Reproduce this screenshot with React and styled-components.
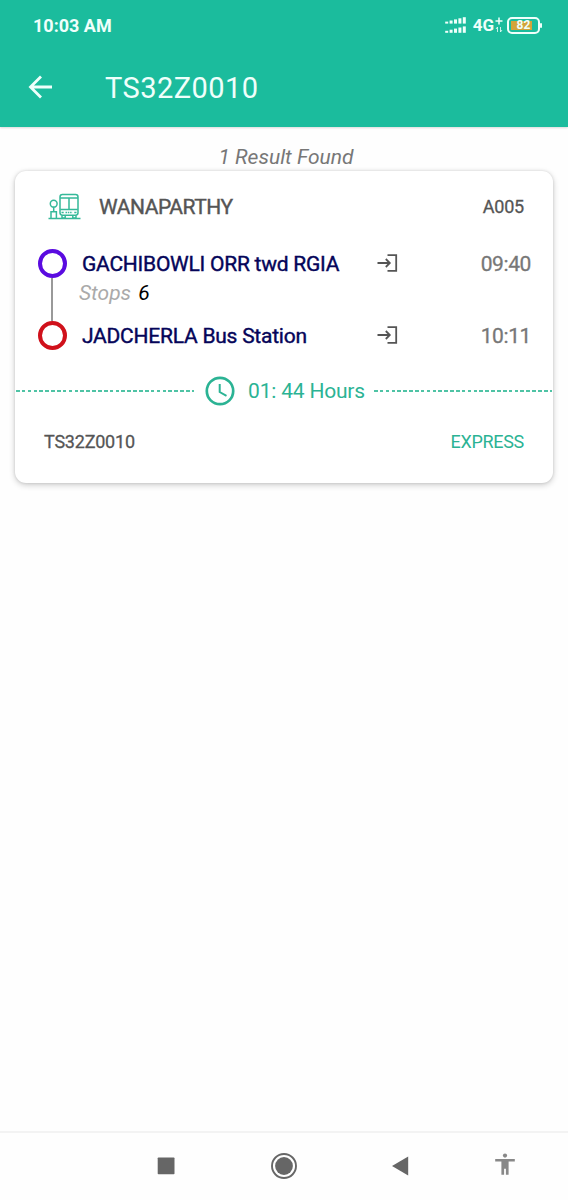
import React from 'react';
import styled, { createGlobalStyle } from 'styled-components';

const GlobalStyle = createGlobalStyle`
  * {
    box-sizing: border-box;
  }

  body {
    margin: 0;
    background: #fefefe;
    font-family: Roboto, 'Liberation Sans', sans-serif;
  }

  svg {
    display: block;
    flex-shrink: 0;
  }
`;

const Screen = styled.div`
  display: flex;
  flex-direction: column;
  width: 568px;
  height: 1200px;
  overflow: hidden;
`;

const Header = styled.header`
  height: 127px;
  background: #1bbc9d;
  color: #effffb;
  box-shadow: 0 1px 2px rgba(0, 0, 0, 0.15);
`;

const StatusBar = styled.div`
  display: flex;
  align-items: center;
  height: 50px;
  padding: 0 25px 0 33px;

  .time {
    margin-right: auto;
    font-size: 18px;
    font-weight: 700;
  }

  .network {
    margin-left: 6px;
    font-size: 17px;
    font-weight: 700;
  }
`;

const Battery = styled.div`
  position: relative;
  display: flex;
  align-items: center;
  justify-content: center;
  width: 33px;
  height: 17px;
  margin: 0 3px 0 4px;
  border: 2px solid #effffb;
  border-radius: 5px;
  background: linear-gradient(#d3a43a, #d3a43a) 2px 2px / 21px 9px no-repeat;
  font-size: 12px;
  font-weight: 700;
  line-height: 13px;

  &::after {
    content: '';
    position: absolute;
    top: 4px;
    right: -4px;
    width: 2px;
    height: 5px;
    border-radius: 1px;
    background: #effffb;
  }
`;

const Toolbar = styled.div`
  display: flex;
  align-items: center;
  height: 74px;
  padding-left: 28px;

  h1 {
    margin: 2px 0 0 52px;
    font-size: 29px;
    font-weight: 400;
    letter-spacing: 0.45px;
  }
`;

const ResultCount = styled.p`
  height: 44px;
  margin: 0;
  padding-left: 4px;
  line-height: 60px;
  text-align: center;
  font-size: 21px;
  font-style: italic;
  color: #777;
`;

const Card = styled.section`
  height: 312px;
  margin: 0 15px;
  border-radius: 11px;
  background: #fff;
  box-shadow: 0 2px 6px rgba(0, 0, 0, 0.2), 0 0 3px rgba(0, 0, 0, 0.12);
`;

const CardTitle = styled.div`
  display: flex;
  align-items: center;
  gap: 18px;
  height: 71px;
  padding: 0 29px 0 33px;
`;

const Label = styled.span`
  margin-left: ${(props) => (props.$end ? 'auto' : '0')};
  font-size: ${(props) => props.$size}px;
  letter-spacing: ${(props) => props.$spacing || 0}px;
  color: ${(props) => props.$color || '#555'};
  -webkit-text-stroke: ${(props) => props.$stroke || 0}px currentColor;
  white-space: nowrap;
`;

const Route = styled.div`
  display: grid;
  grid-template-columns: 29px 280px 1fr auto;
  grid-template-rows: 43px 29px 43px;
  column-gap: 15px;
  align-items: center;
  padding: 0 22px 0 23px;
  height: 115px;

  > svg {
    margin-bottom: 1px;
  }
`;

const Track = styled.div`
  grid-row: 1 / 4;
  display: flex;
  flex-direction: column;
  align-items: center;
`;

const Point = styled.div`
  width: 29px;
  height: 29px;
  border: 4px solid ${(props) => props.$color};
  border-radius: 50%;
`;

const Line = styled.div`
  width: 2px;
  height: 43px;
  margin-right: 1px;
  background: #999;
`;

const Stops = styled.div`
  grid-column: 2 / 5;
  align-self: start;
  margin: -6px 0 0 -3px;
  font-size: 21px;
  font-style: italic;
  line-height: 29px;
  color: #aaa;

  b {
    margin-left: 2px;
    font-weight: 400;
    color: #000;
  }
`;

const Duration = styled.div`
  display: flex;
  align-items: center;
  height: 67px;
  padding: 0 1px;
`;

const Dashes = styled.div`
  width: 178px;
  height: 2px;
  background: repeating-linear-gradient(90deg, #4fc3a5 0 3.6px, transparent 3.6px 5.86px);
`;

const DurationText = styled.div`
  display: flex;
  flex: 1;
  align-items: center;
  justify-content: center;
  gap: 13px;
  padding-left: 2px;

  span {
    padding-top: 1px;
  }
`;

const CardFooter = styled.div`
  display: flex;
  align-items: center;
  height: 35px;
  padding: 0 29px;
`;

const NavBar = styled.nav`
  display: grid;
  grid-template-columns: 118px 118px 114px 95px;
  place-items: center;
  height: 69px;
  margin-top: auto;
  padding: 0 16px 2px 107px;
  border-top: 2px solid #f3f3f3;
  background: #fefefe;
`;

const SignalIcon = () => (
  <svg width="22" height="18" viewBox="0 0 22 18" fill="#effffb">
    {[0, 1, 2, 3, 4].map((i) => (
      <g key={i}>
        <rect x={i * 4.4 + 0.2} y={5.6 - i * 1.1} width="3" height={2 + i * 1.1} />
        <rect x={i * 4.4 + 0.2} y={14.8 - i * 1.1} width="3" height={2 + i * 1.1} />
      </g>
    ))}
  </svg>
);

const DataIcon = () => (
  <svg width="9" height="18" viewBox="0 0 9 18" fill="none" stroke="#effffb">
    <path d="M1.5 5h7M5 1.5v7" strokeWidth="1.5" />
    <path d="M3.5 16v-5l-1.5 2M6.5 11v5l1.5-2" strokeWidth="0.8" />
  </svg>
);

const BackIcon = () => (
  <svg width="25" height="24" viewBox="0 0 25 24" fill="none" stroke="#effffb" strokeWidth="2.8">
    <path d="M24 12H3M13 1.5 2.5 12 13 22.5" />
  </svg>
);

const BusStopIcon = () => (
  <svg width="33" height="27" viewBox="0 0 33 27" fill="none" stroke="#35b999" strokeWidth="1.5">
    <path d="M0.5 25.4h32" />
    <circle cx="5.7" cy="10.7" r="3.4" />
    <path d="M5.7 14.1v4M3 25v-6.2h5.4V25" />
    <rect x="12" y="1.5" width="18" height="20.7" rx="2.4" />
    <path d="M12 5h18M12.3 16.5h17.5M21 5v11.5M14 22.5V25h3.2v-2.5M24.8 22.5V25H28v-2.5" />
    <path d="M13.5 19.5h2.2M26.3 19.5h2.2" />
    <path d="M17.5 19.5h7" strokeDasharray="1.5 0.8" />
  </svg>
);

const EnterIcon = () => (
  <svg width="21" height="18" viewBox="0 0 21 18" fill="none" stroke="#555" strokeWidth="1.8">
    <path d="M0.5 9h12M8.8 5 12.8 9 8.8 13M10.5 1.2h8.7v15.6h-8.7" />
  </svg>
);

const ClockIcon = () => (
  <svg width="30" height="30" viewBox="0 0 30 30" fill="none" stroke="#2bb394">
    <circle cx="15" cy="15" r="13.2" strokeWidth="2.7" />
    <path d="M14.7 8v8l6.8 3.8" strokeWidth="2" />
  </svg>
);

const SquareIcon = () => (
  <svg width="18" height="18" viewBox="0 0 18 18">
    <rect x="0.7" y="0.4" width="16.8" height="16.8" rx="0.8" fill="#666" />
  </svg>
);

const HomeIcon = () => (
  <svg width="26" height="26" viewBox="0 0 26 26">
    <circle cx="13" cy="13" r="12" fill="none" stroke="#666" strokeWidth="1.9" />
    <circle cx="13" cy="13" r="8.9" fill="#666" />
  </svg>
);

const TriangleIcon = () => (
  <svg width="17" height="20" viewBox="0 0 17 20">
    <path d="M16.2 0.5v19L0 10z" fill="#666" />
  </svg>
);

const PersonIcon = () => (
  <svg width="20" height="26" viewBox="0 0 20 26" fill="#888">
    <circle cx="10" cy="2.6" r="2.1" />
    <path d="M0.2 6.1h19.6v2.5H13.6V21.7h-2.7v-6H9.1v6H6.4V8.6H0.2z" />
  </svg>
);

const stations = [
  { name: 'GACHIBOWLI ORR twd RGIA', time: '09:40' },
  { name: 'JADCHERLA Bus Station', time: '10:11' },
];

const Station = ({ station }) => (
  <>
    <Label $size={21} $spacing={-0.24} $stroke={0.4} $color="#050559">
      {station.name}
    </Label>
    <EnterIcon />
    <Label $size={21} $spacing={-0.4} $stroke={0.3} $color="#777">
      {station.time}
    </Label>
  </>
);

const BusCard = () => (
  <Card>
    <CardTitle>
      <BusStopIcon />
      <Label $size={21} $spacing={-0.45} $stroke={0.4}>
        WANAPARTHY
      </Label>
      <Label $size={18} $spacing={-0.2} $stroke={0.3} $end>
        A005
      </Label>
    </CardTitle>
    <Route>
      <Track>
        <Point $color="#5a0be0" />
        <Line />
        <Point $color="#d0111b" />
      </Track>
      <Station station={stations[0]} />
      <Stops>
        Stops <b>6</b>
      </Stops>
      <Station station={stations[1]} />
    </Route>
    <Duration>
      <Dashes />
      <DurationText>
        <ClockIcon />
        <Label $size={21} $spacing={-0.2} $color="#2bb394">
          01: 44 Hours
        </Label>
      </DurationText>
      <Dashes />
    </Duration>
    <CardFooter>
      <Label $size={18} $spacing={-0.22} $stroke={0.3}>
        TS32Z0010
      </Label>
      <Label $size={18} $spacing={-0.3} $color="#2bb394" $end>
        EXPRESS
      </Label>
    </CardFooter>
  </Card>
);

const App = () => {
  return (
    <Screen>
      <GlobalStyle />
      <Header>
        <StatusBar>
          <span className="time">10:03 AM</span>
          <SignalIcon />
          <span className="network">4G</span>
          <DataIcon />
          <Battery>82</Battery>
        </StatusBar>
        <Toolbar>
          <BackIcon />
          <h1>TS32Z0010</h1>
        </Toolbar>
      </Header>
      <ResultCount>1 Result Found</ResultCount>
      <BusCard />
      <NavBar>
        <SquareIcon />
        <HomeIcon />
        <TriangleIcon />
        <PersonIcon />
      </NavBar>
    </Screen>
  );
};

export default App;
